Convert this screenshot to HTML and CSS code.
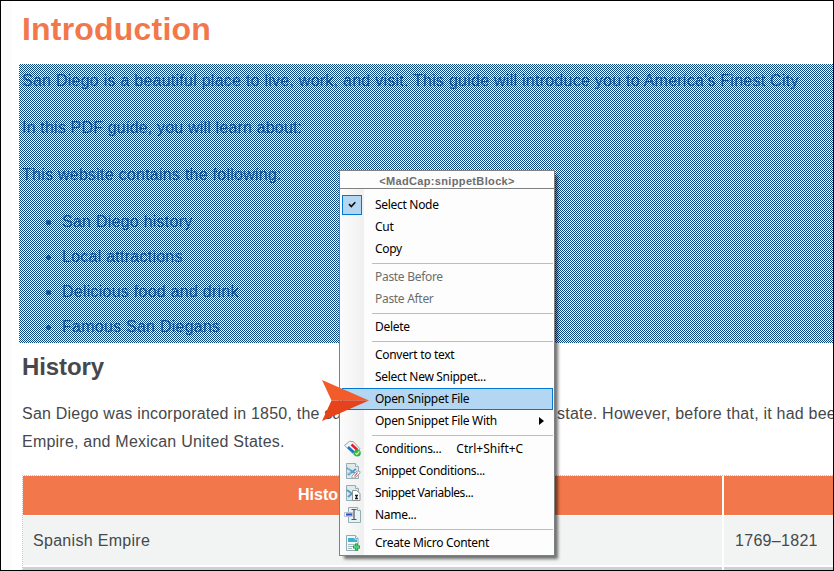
FILE: index.html
```html
<!DOCTYPE html>
<html lang="en">
<head>
<meta charset="utf-8">
<title>Introduction</title>
<link rel="stylesheet" href="styles.css">
</head>
<body>
<div class="editor">
  <main class="doc">
    <h1>Introduction</h1>
    <section class="snippet">
      <p>San Diego is a beautiful place to live, work, and visit. This guide will introduce you to America's Finest City</p>
      <p class="tight">In this PDF guide, you will learn about:</p>
      <p>This website contains the following:</p>
      <ul>
        <li>San Diego history</li>
        <li>Local attractions</li>
        <li>Delicious food and drink</li>
        <li>Famous San Diegans</li>
      </ul>
    </section>
    <h2>History</h2>
    <div class="body">
      <p class="split"><span>San Diego was incorporated in 1850, the sa</span><span>state. However, before that, it had bee</span></p>
      <p>Empire, and Mexican United States.</p>
    </div>
    <div class="table">
      <div class="th first">Histo</div><div class="th"></div>
      <div class="td">Spanish Empire</div><div class="td date">1769–1821</div>
      <div class="next"></div><div class="next"></div>
    </div>
  </main>

  <nav class="menu">
    <div class="title">&lt;MadCap:snippetBlock&gt;</div>
    <div class="items">
      <div class="item"><i class="check"><svg width="18" height="18" viewBox="0 0 18 18"><path d="M6 8.2l2.3 2.4 4-4.4" fill="none" stroke="#111" stroke-width="1.7"/></svg></i><span>Select Node</span></div>
      <div class="item"><span>Cut</span></div>
      <div class="item"><span>Copy</span></div>
      <hr>
      <div class="item off"><span>Paste Before</span></div>
      <div class="item off"><span>Paste After</span></div>
      <hr>
      <div class="item"><span>Delete</span></div>
      <hr>
      <div class="item"><span>Convert to text</span></div>
      <div class="item"><span>Select New Snippet...</span></div>
      <div class="item hot"><span>Open Snippet File</span></div>
      <div class="item"><span>Open Snippet File With</span><b class="sub"></b></div>
      <hr>
      <div class="item"><i><svg width="16" height="16" viewBox="0 0 16 16">
        <path d="M-.5 4.300L3 1.500l1.500-1.200 4 .5 6.500 7-6 6z" fill="#f4f4f4" stroke="#a2a2a2"/>
        <path d="M3 6l6 5.500" stroke="#1676c8" stroke-width="2.400"/>
        <path d="M6.500 3.500l6 5.500" stroke="#e21c2b" stroke-width="2.400"/>
        <circle cx="12.300" cy="12" r="3.500" fill="#36b34a"/>
        <path d="M10.500 12l1.300 1.400 2.500-3" fill="none" stroke="#d9ffd9" stroke-width="1.100"/></svg></i><span>Conditions...</span><span class="key">Ctrl+Shift+C</span></div>
      <div class="item"><i><svg width="16" height="16" viewBox="0 0 16 16">
        <path d="M1.500.5h9l3 3v12h-12z" fill="#dfeaed" stroke="#94aeb5"/><path d="M10.500.5v3h3" fill="#fff" stroke="#94aeb5"/>
        <path d="M2 5l9 6M3 12l8-6" stroke="#5b9cc0" stroke-width="2"/><path d="M3 4.500l2 4M2 10h4" stroke="#9ccbdd"/>
        <path d="M7 13l5-5 3 .5v1.500l-5 5H7z" fill="#fff" stroke="#a4a4a4"/><path d="M9.500 13.500l3-4" stroke="#df4050" stroke-width="1.200"/></svg></i><span>Snippet Conditions...</span></div>
      <div class="item"><i><svg width="16" height="16" viewBox="0 0 16 16">
        <path d="M1.500.5h9l3 3v12h-12z" fill="#dfeaed" stroke="#94aeb5"/><path d="M10.500.5v3h3" fill="#fff" stroke="#94aeb5"/>
        <path d="M2 5l8 6M3 12l7-6" stroke="#5b9cc0" stroke-width="2"/>
        <path d="M7.500 5.500h4l3.500 3v7H7.500z" fill="#fff" stroke="#8d9599"/><path d="M10 10.500h3M10 13.500h3M11.500 10.500v3" stroke="#222" stroke-width="1.300"/></svg></i><span class="vars">Snippet Variables...</span></div>
      <div class="item"><i><svg width="16" height="16" viewBox="0 0 16 16">
        <path d="M3.500.5h9l3 3v12h-12z" fill="#e9f1f3" stroke="#94aeb5"/><path d="M12.500.5v3h3" fill="#fff" stroke="#94aeb5"/>
        <path d="M-.5 5.500h8v4h-8z" fill="#fff" stroke="#b6c2d5"/><path d="M1 7.500h6" stroke="#294dc0" stroke-width="2.200"/>
        <path d="M6.500 2.500h5M9 2.500v10M6.500 12.500h5" fill="none" stroke="#555" stroke-width="1.200"/></svg></i><span>Name...</span></div>
      <hr>
      <div class="item"><i><svg width="16" height="16" viewBox="0 0 16 16">
        <path d="M1.500.5h9l2.500 3v12H1.500z" fill="#f2f7f8" stroke="#8dabb2"/><path d="M10.500.5v3h2.500" fill="#fff" stroke="#8dabb2"/>
        <path d="M3 3h6.500v1.500H12V7H3z" fill="#3eb0cf"/><path d="M3 9.500h8M3 11.500h5M3 13.500h4" stroke="#a5bcc1"/>
        <path d="M11.500 8.500v7M8 12h7" stroke="#17933a" stroke-width="3"/><path d="M11.500 9.200v5.600M8.700 12h5.600" stroke="#43d36b" stroke-width="1.800"/></svg></i><span>Create Micro Content</span></div>
    </div>
  </nav>
  <svg class="pointer" width="48" height="42" viewBox="0 0 48 42"><path d="M0 0L47 20.500H9.500z" fill="#f25b2a"/><path d="M9.500 20.500H47L0 41z" fill="#e6421c"/></svg>
</div>
</body>
</html>
```
FILE: styles.css
```css
* { box-sizing: border-box; }
body { margin: 0; }
.editor {
  position: relative; width: 834px; height: 571px; overflow: hidden;
  border: 1px solid #000;
  background: linear-gradient(90deg, #fcfcfc 11px, #fff 11px);
  font: 16px/28px "Liberation Sans", Arial, sans-serif; color: #46484b;
}
.doc { padding-left: 21px; white-space: nowrap; }
h1, h2, p, ul { margin: 0; }
h1 { height: 63px; padding-top: 9px; font-size: 32px; line-height: 38px; color: #f2784b; letter-spacing: .2px; }
.snippet { position: relative; height: 279px; margin-left: -3px; padding: 3px 0 0 3px; letter-spacing: .25px; }
.snippet::after {
  content: ""; position: absolute; inset: 0;
  background: repeating-conic-gradient(#094885 0 25%, transparent 0 50%) 0 0 / 2px 2px;
}
.snippet p { height: 47px; }
.snippet .tight { letter-spacing: .18px; }
.snippet ul { padding-left: 40px; line-height: 35px; margin-top: -4px; }
h2 { height: 56px; padding-top: 10px; font-size: 24px; line-height: 28px; letter-spacing: -.1px; }
.body { height: 76px; padding-top: 1px; letter-spacing: .22px; }
.split { display: grid; grid-template-columns: 535px 1fr; }
.table {
  display: grid; grid-template-columns: 699px 1fr; grid-template-rows: 39px 49px 4px;
  gap: 1px 2px; border: 1px dotted #c2c6c6; border-right: 0; border-bottom: 0;
}
.th { background: #f2784b; color: #fff; font-weight: bold; line-height: 38px; }
.first { padding-left: 275px; }
.td { background: #f2f4f4; padding-left: 10px; line-height: 49px; letter-spacing: .3px; }
.date { padding-left: 11px; }
.next { background: #cdd0d5; margin-top: 1px; }

.menu {
  position: absolute; left: 338px; top: 169px; width: 216px; height: 386px;
  border: 1px solid #808080; background: #fdfdfd; color: #000;
  box-shadow: 4px 4px 3px -1px rgba(0,0,0,.55);
  font: 12px/22px "Noto Sans", "Open Sans", sans-serif; letter-spacing: -.3px; white-space: nowrap;
}
.title {
  height: 18px; border-bottom: 1px solid #808080; text-align: center; color: #6d6d6d;
  font: bold 11px/20px "Liberation Sans", Arial, sans-serif; letter-spacing: .35px;
}
.items { height: 366px; padding-top: 5px; background: linear-gradient(90deg, #fcfcfc, #f0f0f0 24px, #fdfdfd 24px); }
.item { display: flex; align-items: center; height: 22px; padding-left: 35px; margin-right: 1px; }
.item i { display: flex; width: 30px; margin: 0 0 0 -30px; }
.item svg { overflow: visible; }
.item .check { width: 20px; height: 20px; margin: 0 13px 0 -33px; border: 1px solid #0078d7; background: #b3d7f3; }
.off { color: #6d6d6d; }
.hot { border: 1px solid #0078d7; background: #b3d7f3; margin-left: 2px; padding-left: 32px; }
.sub { margin-left: auto; margin-right: 9px; border: solid transparent; border-width: 4px 0 4px 5px; border-left-color: #000; }
.vars { letter-spacing: -.45px; }
.key { margin-left: 15px; letter-spacing: 0; }
hr { height: 1px; margin: 3px 1px 2px 32px; border: 0; background: #bdbdbd; }
.pointer { position: absolute; left: 321px; top: 379px; }
```
